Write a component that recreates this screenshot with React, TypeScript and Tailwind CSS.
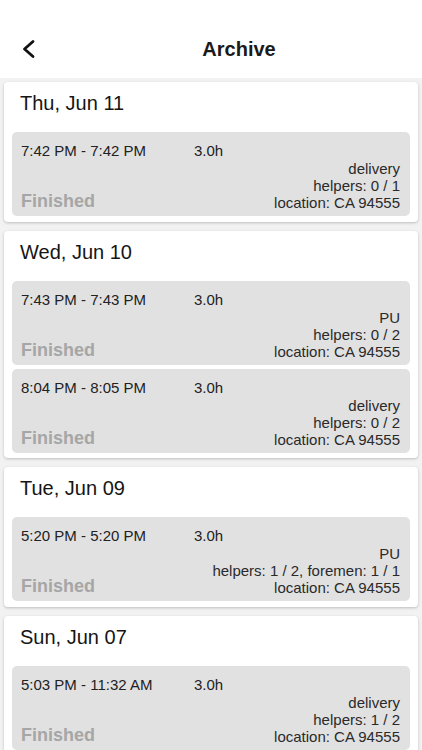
import React from "react";

type Job = {
  time: string;
  kind: string;
  helpers: string;
};

type Day = { date: string; jobs: Job[] };

const days: Day[] = [
  { date: "Thu, Jun 11", jobs: [{ time: "7:42 PM - 7:42 PM", kind: "delivery", helpers: "helpers: 0 / 1" }] },
  {
    date: "Wed, Jun 10",
    jobs: [
      { time: "7:43 PM - 7:43 PM", kind: "PU", helpers: "helpers: 0 / 2" },
      { time: "8:04 PM - 8:05 PM", kind: "delivery", helpers: "helpers: 0 / 2" },
    ],
  },
  { date: "Tue, Jun 09", jobs: [{ time: "5:20 PM - 5:20 PM", kind: "PU", helpers: "helpers: 1 / 2, foremen: 1 / 1" }] },
  { date: "Sun, Jun 07", jobs: [{ time: "5:03 PM - 11:32 AM", kind: "delivery", helpers: "helpers: 1 / 2" }] },
];

function JobBox({ job }: { job: Job }) {
  return (
    <div className="mx-2 rounded-[5px] bg-[#e1e1e1] pl-[9px] pr-[10px] pt-[10px] pb-[5px]">
      <div className="flex h-[18px] items-center text-[15px] leading-[18px] text-[#222]">
        <span className="w-[173px]">{job.time}</span>
        <span>3.0h</span>
      </div>
      <div className="flex items-end justify-between">
        <span className="text-[18px] font-bold leading-[20px] text-[#a6a6a6]">Finished</span>
        <div className="flex flex-col items-end text-[15px] leading-[17px] text-[#2a2a2a]">
          <span>{job.kind}</span>
          <span>{job.helpers}</span>
          <span>location: CA 94555</span>
        </div>
      </div>
    </div>
  );
}

export default function App() {
  return (
    <div
      className="min-h-screen w-full bg-[#f2f2f2]"
      style={{ fontFamily: '"Liberation Sans", Arial, sans-serif' }}
    >
      <div className="bg-white pt-[20px]">
        <div className="flex h-[58px] items-center">
          <div className="flex w-[56px] items-center pl-[20px]">
            <svg width="18" height="20" viewBox="0 0 18 20" fill="none">
              <path d="M13 2.5 L4.5 10 L13 17.5" stroke="#111" strokeWidth="2.8" strokeLinecap="round" strokeLinejoin="round" />
            </svg>
          </div>
          <div className="flex-1 text-center text-[20px] font-bold text-[#1a1a1a]">Archive</div>
          <div className="w-0" />
        </div>
      </div>
      <div className="flex flex-col gap-[9px] px-1 pt-1">
        {days.map((d) => (
          <div key={d.date} className="rounded-[4px] bg-white pb-[5.5px] shadow-[0_1px_3px_rgba(0,0,0,0.22)]">
            <div className="pl-4 pt-[9px] pb-[17px] text-[20px] leading-[24px] text-[#151515]">{d.date}</div>
            <div className="flex flex-col gap-1">
              {d.jobs.map((j, i) => (
                <JobBox key={i} job={j} />
              ))}
            </div>
          </div>
        ))}
      </div>
    </div>
  );
}
